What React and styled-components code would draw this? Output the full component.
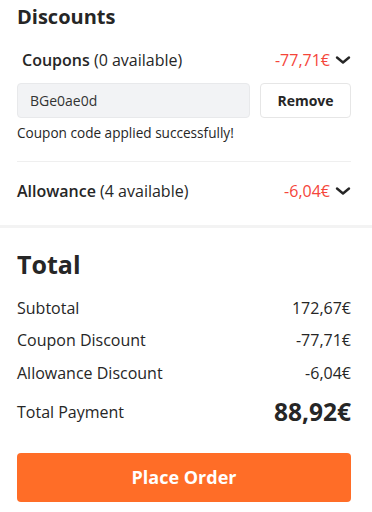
import React from 'react';
import styled, { createGlobalStyle } from 'styled-components';

const Global = createGlobalStyle`
  body {
    margin: 0;
    background: #fff;
    font-family: "Open Sans", "Noto Sans", sans-serif;
    color: #262626;
  }
`;

const Section = styled.section`
  padding: ${p => p.$pad};
`;

const Heading = styled.h2`
  margin: 0;
  font-size: ${p => p.$size}px;
  font-weight: 700;
  line-height: 1.3;
  color: #262626;
`;

const Row = styled.div`
  display: flex;
  align-items: center;
  justify-content: space-between;
  padding-left: ${p => p.$indent || 0}px;
  height: ${p => p.$h}px;
`;

const Label = styled.span`
  font-size: 16px;
  color: #262626;
  b { font-weight: 600; }
`;

const Amount = styled.span`
  display: flex;
  align-items: center;
  gap: 5px;
  font-size: 16px;
  color: #f5453a;
`;

const CodeRow = styled.div`
  display: flex;
  gap: 10px;
  margin-top: 3px;
`;

const CodeInput = styled.div`
  flex: 1;
  height: 35px;
  box-sizing: border-box;
  background: #f2f3f5;
  border: 1px solid #e8e9eb;
  border-radius: 4px;
  padding: 0 12px;
  display: flex;
  align-items: center;
  font-size: 14px;
  color: #333;
`;

const RemoveButton = styled.button`
  width: 91px;
  height: 35px;
  background: #fff;
  border: 1px solid #e6e6e6;
  border-radius: 4px;
  font-family: inherit;
  font-size: 14px;
  font-weight: 700;
  color: #262626;
`;

const Note = styled.p`
  margin: 6px 0 0;
  font-size: 13.6px;
  line-height: 18px;
  color: #262626;
`;

const Divider = styled.hr`
  margin: 19px 0 0;
  border: 0;
  border-top: 1px solid #efefef;
`;

const Band = styled.div`
  height: 3px;
  margin-top: 5px;
  background: #f3f3f3;
`;

const SumRows = styled.div`
  margin-top: 11px;
`;

const SumRow = styled.div`
  display: flex;
  justify-content: space-between;
  align-items: center;
  height: ${p => p.$h}px;
  font-size: 16px;
  color: #262626;
`;

const BigValue = styled.span`
  font-size: 24.5px;
  font-weight: 700;
`;

const OrderButton = styled.button`
  width: 100%;
  height: 49px;
  margin-top: 19px;
  background: #ff6d27;
  border: 0;
  border-radius: 4px;
  color: #fff;
  font-family: inherit;
  font-size: 18px;
  font-weight: 700;
`;

const Chevron = () => (
  <svg width="16" height="10" viewBox="0 0 16 10">
    <path d="M2 2.5l6 5 6-5" fill="none" stroke="#262626" strokeWidth="2.4" strokeLinecap="round" strokeLinejoin="round" />
  </svg>
);

export default function App() {
  return (
    <>
      <Global />
      <Section $pad="4px 21px 0 17px">
        <Heading $size={20}>Discounts</Heading>
        <Row $indent={5} $h={40} style={{ marginTop: 10 }}>
          <Label><b>Coupons</b> (0 available)</Label>
          <Amount>-77,71€ <Chevron /></Amount>
        </Row>
        <CodeRow>
          <CodeInput>BGe0ae0d</CodeInput>
          <RemoveButton>Remove</RemoveButton>
        </CodeRow>
        <Note>Coupon code applied successfully!</Note>
        <Divider />
        <Row $h={58}>
          <Label><b>Allowance</b> (4 available)</Label>
          <Amount>-6,04€ <Chevron /></Amount>
        </Row>
      </Section>
      <Band />
      <Section $pad="20px 21px 0 17px">
        <Heading $size={25}>Total</Heading>
        <SumRows>
          <SumRow $h={32}><span>Subtotal</span><span>172,67€</span></SumRow>
          <SumRow $h={33}><span>Coupon Discount</span><span>-77,71€</span></SumRow>
          <SumRow $h={33}><span>Allowance Discount</span><span>-6,04€</span></SumRow>
          <SumRow $h={44}><span>Total Payment</span><BigValue>88,92€</BigValue></SumRow>
        </SumRows>
        <OrderButton>Place Order</OrderButton>
      </Section>
    </>
  );
}
